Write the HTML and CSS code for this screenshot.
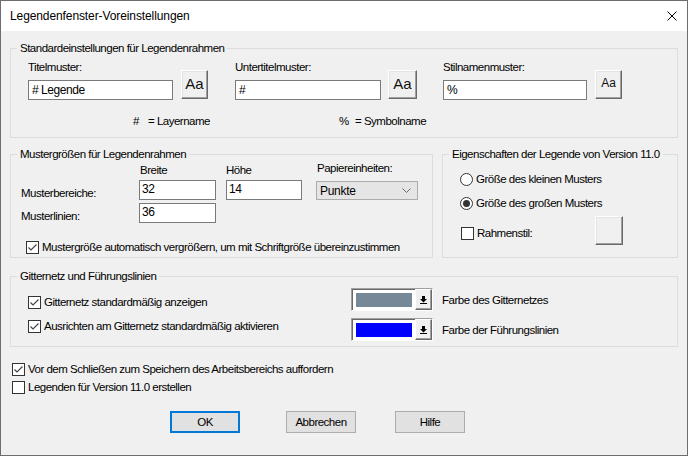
FILE: index.html
```html
<!DOCTYPE html>
<html lang="de">
<head>
<meta charset="utf-8">
<title>Legendenfenster-Voreinstellungen</title>
<link rel="stylesheet" href="styles.css">
</head>
<body>
<div class="window">
  <div class="titlebar">
    <span class="title">Legendenfenster-Voreinstellungen</span>
    <svg class="close" width="10" height="10" viewBox="0 0 10 10"><path d="M0.5 0.5 L9.5 9.5 M9.5 0.5 L0.5 9.5" stroke="#000" stroke-width="1" fill="none"/></svg>
  </div>
  <div class="content">
    <fieldset class="group g1">
      <legend>Standardeinstellungen für Legendenrahmen</legend>
      <div class="g1-inner">
        <div class="patterns">
          <div class="pat pat-title">
            <span class="lbl">Titelmuster:</span>
            <div class="field">#&nbsp;Legende</div>
            <div class="aa">Aa</div>
          </div>
          <div class="pat pat-sub">
            <span class="lbl">Untertitelmuster:</span>
            <div class="field">#</div>
            <div class="aa">Aa</div>
          </div>
          <div class="pat pat-style">
            <span class="lbl">Stilnamenmuster:</span>
            <div class="field">%</div>
            <div class="aa aa-small">Aa</div>
          </div>
        </div>
        <div class="keys">
          <span class="key key1"><span class="sym">#</span><span>= Layername</span></span>
          <span class="key key2"><span class="sym">%</span><span>= Symbolname</span></span>
        </div>
      </div>
    </fieldset>

    <div class="mid">
      <fieldset class="group g2">
        <legend>Mustergrößen für Legendenrahmen</legend>
        <div class="g2-inner">
          <div class="sizes">
            <span class="h-breite">Breite</span>
            <span class="h-hoehe">Höhe</span>
            <span class="h-papier">Papiereinheiten:</span>
            <span class="l-bereich">Musterbereiche:</span>
            <div class="field num f-breite">32</div>
            <div class="field num f-hoehe">14</div>
            <div class="select">
              <span>Punkte</span>
              <svg width="9" height="5" viewBox="0 0 9 5"><polyline points="0.5,0.5 4.5,4.5 8.5,0.5" fill="none" stroke="#6a6a6a" stroke-width="1"/></svg>
            </div>
            <span class="l-linien">Musterlinien:</span>
            <div class="field num f-linien">36</div>
          </div>
          <div class="check autosize">
            <svg class="box" viewBox="0 0 13 13"><rect x="0.5" y="0.5" width="12" height="12" fill="#fff" stroke="#333"/><polyline points="2.5,6.5 5,9 10.5,3.5" fill="none" stroke="#444" stroke-width="1.2"/></svg>
            <span>Mustergröße automatisch vergrößern, um mit Schriftgröße übereinzustimmen</span>
          </div>
        </div>
      </fieldset>

      <fieldset class="group g3">
        <legend>Eigenschaften der Legende von Version 11.0</legend>
        <div class="g3-inner">
          <div class="check">
            <svg class="box" viewBox="0 0 13 13"><circle cx="6.5" cy="6.5" r="6" fill="#fff" stroke="#333"/></svg>
            <span>Größe des kleinen Musters</span>
          </div>
          <div class="check radio2">
            <svg class="box" viewBox="0 0 13 13"><circle cx="6.5" cy="6.5" r="6" fill="#fff" stroke="#333"/><circle cx="6.5" cy="6.5" r="3.5" fill="#333"/></svg>
            <span>Größe des großen Musters</span>
          </div>
          <div class="frame-row">
            <div class="check frame-check">
              <svg class="box" viewBox="0 0 13 13"><rect x="0.5" y="0.5" width="12" height="12" fill="#fff" stroke="#333"/></svg>
              <span>Rahmenstil:</span>
            </div>
            <div class="raised frame-btn"></div>
          </div>
        </div>
      </fieldset>
    </div>

    <fieldset class="group g4">
      <legend>Gitternetz und Führungslinien</legend>
      <div class="g4-inner">
        <div class="grid-checks">
          <div class="check">
            <svg class="box" viewBox="0 0 13 13"><rect x="0.5" y="0.5" width="12" height="12" fill="#fff" stroke="#333"/><polyline points="2.5,6.5 5,9 10.5,3.5" fill="none" stroke="#444" stroke-width="1.2"/></svg>
            <span>Gitternetz standardmäßig anzeigen</span>
          </div>
          <div class="check">
            <svg class="box" viewBox="0 0 13 13"><rect x="0.5" y="0.5" width="12" height="12" fill="#fff" stroke="#333"/><polyline points="2.5,6.5 5,9 10.5,3.5" fill="none" stroke="#444" stroke-width="1.2"/></svg>
            <span>Ausrichten am Gitternetz standardmäßig aktivieren</span>
          </div>
        </div>
        <div class="colors">
          <div class="combo">
            <div class="swatch swatch-grid"></div>
            <div class="drop"><svg width="7" height="8" viewBox="0 0 7 8"><rect x="2" y="0" width="3" height="3" fill="#000"/><polygon points="0,3 7,3 3.5,6.5" fill="#000"/><rect x="0" y="7" width="7" height="1" fill="#000"/></svg></div>
          </div>
          <span>Farbe des Gitternetzes</span>
          <div class="combo">
            <div class="swatch swatch-guide"></div>
            <div class="drop"><svg width="7" height="8" viewBox="0 0 7 8"><rect x="2" y="0" width="3" height="3" fill="#000"/><polygon points="0,3 7,3 3.5,6.5" fill="#000"/><rect x="0" y="7" width="7" height="1" fill="#000"/></svg></div>
          </div>
          <span>Farbe der Führungslinien</span>
        </div>
      </div>
    </fieldset>

    <div class="opts">
      <div class="check">
        <svg class="box" viewBox="0 0 13 13"><rect x="0.5" y="0.5" width="12" height="12" fill="#fff" stroke="#333"/><polyline points="2.5,6.5 5,9 10.5,3.5" fill="none" stroke="#444" stroke-width="1.2"/></svg>
        <span>Vor dem Schließen zum Speichern des Arbeitsbereichs auffordern</span>
      </div>
      <div class="check">
        <svg class="box" viewBox="0 0 13 13"><rect x="0.5" y="0.5" width="12" height="12" fill="#fff" stroke="#333"/></svg>
        <span>Legenden für Version 11.0 erstellen</span>
      </div>
    </div>

    <div class="buttons">
      <div class="btn btn-ok">OK</div>
      <div class="btn btn-cancel">Abbrechen</div>
      <div class="btn btn-help">Hilfe</div>
    </div>
  </div>
</div>
</body>
</html>
```
FILE: styles.css
```css
* { box-sizing: border-box; }
html, body { margin: 0; padding: 0; }
body {
  width: 688px;
  height: 456px;
  overflow: hidden;
  font-family: "Liberation Sans", Arial, sans-serif;
  font-size: 11.5px;
  letter-spacing: -0.5px;
  color: #000;
  background: #fff;
}
.window {
  width: 688px;
  height: 456px;
  border: 1px solid #6d6d6d;
  background: #f0f0f0;
  display: flex;
  flex-direction: column;
}
.titlebar {
  flex: none;
  height: 30px;
  background: #fff;
  display: flex;
  align-items: center;
  justify-content: space-between;
  padding: 0 10px 0 9px;
}
.title {
  font-family: "Liberation Sans", Arial, sans-serif;
  font-size: 12px;
  letter-spacing: -0.1px;
}
.close { display: block; }
.content { padding: 10px 9px 0 9px; }

fieldset.group {
  margin: 0;
  padding: 0;
  min-width: 0;
  border: 1px solid #dcdcdc;
}
fieldset.group > legend {
  margin-left: 6px;
  padding: 0 3px;
  line-height: 14px;
  height: 14px;
  white-space: nowrap;
}

/* group 1 */
.g1-inner { padding: 5px 0 9px 17px; }
.patterns { display: flex; }
.pat {
  display: grid;
  grid-template-rows: 20px 20px;
  column-gap: 8px;
}
.pat-title { grid-template-columns: 145px 27px; }
.pat-sub { grid-template-columns: 146px 29px; column-gap: 7px; margin-left: 27px; }
.pat-style { grid-template-columns: 144px 27px; margin-left: 26px; }
.pat .lbl { grid-column: 1; grid-row: 1; line-height: 14px; white-space: nowrap; }
.pat .field { grid-column: 1; grid-row: 2; }
.pat .aa { grid-column: 2; grid-row: 1 / 3; align-self: end; height: 29px; margin-bottom: 1px; }

.field {
  background: #fff;
  border: 1px solid #7a7a7a;
  height: 20px;
  line-height: 18px;
  padding: 0 3px;
  white-space: nowrap;
  font-size: 12px;
  letter-spacing: -0.45px;
}
.field.num { line-height: 16px; padding-left: 2px; }

.raised {
  background: #f0f0f0;
  border: 1px solid;
  border-color: #fff #696969 #696969 #fff;
  box-shadow: inset -1px -1px #a0a0a0, inset 1px 1px #e3e3e3;
}
.aa {
  background: #f0f0f0;
  border: 1px solid;
  border-color: #fff #696969 #696969 #fff;
  box-shadow: inset -1px -1px #a0a0a0, inset 1px 1px #e3e3e3;
  font-family: "Liberation Sans", Arial, sans-serif;
  font-size: 15px;
  letter-spacing: 0;
  display: flex;
  align-items: center;
  justify-content: center;
  padding-bottom: 3px;
  color: #111;
}
.aa-small { font-size: 12px; }

.keys {
  display: flex;
  margin-top: 14px;
  padding-left: 105px;
  line-height: 14px;
  white-space: nowrap;
}
.key { display: flex; }
.key1 { width: 206px; }
.key1 .sym { width: 15px; }
.key2 .sym { width: 16px; }

/* middle groups */
.mid { display: flex; gap: 9px; margin-top: 9px; }
fieldset.g2 { width: 423px; flex: none; }
fieldset.g3 { flex: 1; }

.g2-inner { padding: 2px 0 3px 10px; }
.sizes {
  display: grid;
  grid-template-columns: 118px 77px 10px 76px 14px 102px;
  grid-template-rows: 14px 20px 20px;
  row-gap: 3px;
  line-height: 14px;
  white-space: nowrap;
}
.h-breite { grid-column: 2; grid-row: 1; padding-left: 1px; }
.h-hoehe { grid-column: 4; grid-row: 1; }
.h-papier { grid-column: 6; grid-row: 1; padding-left: 1px; margin-top: -2px; }
.l-bereich { grid-column: 1; grid-row: 2; align-self: end; }
.f-breite { grid-column: 2; grid-row: 2; }
.f-hoehe { grid-column: 4; grid-row: 2; }
.select { grid-column: 6; grid-row: 2; }
.l-linien { grid-column: 1; grid-row: 3; align-self: end; }
.f-linien { grid-column: 2; grid-row: 3; }

.select {
  height: 19px;
  margin-top: 1px;
  background: #e5e5e5;
  border: 1px solid #acacac;
  display: flex;
  align-items: center;
  justify-content: space-between;
  padding: 0 6px 0 3px;
  font-size: 12px;
  letter-spacing: -0.3px;
}

.check {
  display: flex;
  align-items: center;
  gap: 3px;
  height: 14px;
  line-height: 14px;
  white-space: nowrap;
}
.box { width: 13px; height: 13px; flex: none; display: block; }
.autosize { margin: 17px 0 0 5px; }

.g3-inner { padding: 11px 0 0 17px; }
.radio2 { margin-top: 10px; }
.frame-row { display: flex; align-items: flex-start; margin-top: 6px; }
.frame-check { width: 135px; margin-top: 10px; padding-left: 1px; }
.frame-btn { width: 28px; height: 29px; }

/* group 4 */
fieldset.g4 { margin-top: 11px; }
.g4-inner { display: flex; padding-bottom: 5px; }
.grid-checks {
  width: 340px;
  flex: none;
  padding: 12px 0 0 17px;
  display: flex;
  flex-direction: column;
  gap: 10px;
}
.colors {
  padding-top: 5px;
  display: grid;
  grid-template-columns: 82px auto;
  column-gap: 9px;
  row-gap: 7px;
  align-items: center;
  white-space: nowrap;
}
.combo {
  width: 82px;
  height: 23px;
  display: flex;
  border: 1px solid;
  border-color: #a0a0a0 #fff #fff #a0a0a0;
  background: #fff;
  box-shadow: inset 1px 1px #696969;
}
.swatch { width: 56px; height: 14px; margin: 4px 3px 0 4px; }
.swatch-grid { background: #778899; }
.swatch-guide { background: #0000ff; }
.drop {
  width: 17px;
  height: 21px;
  background: #f0f0f0;
  border: 1px solid;
  border-color: #fff #696969 #696969 #fff;
  box-shadow: inset -1px -1px #a0a0a0;
  display: flex;
  align-items: center;
  justify-content: center;
}
.drop svg { display: block; }

/* bottom */
.opts {
  margin: 15px 0 0 2px;
  display: flex;
  flex-direction: column;
  gap: 4px;
}
.buttons { display: flex; margin: 17px 0 0 160px; }
.btn {
  width: 70px;
  height: 22px;
  background: #e1e1e1;
  border: 1px solid #adadad;
  display: flex;
  align-items: center;
  justify-content: center;
}
.btn-ok { border: 2px solid #0078d7; }
.btn-cancel { margin-left: 46px; }
.btn-help { margin-left: 39px; }
```
